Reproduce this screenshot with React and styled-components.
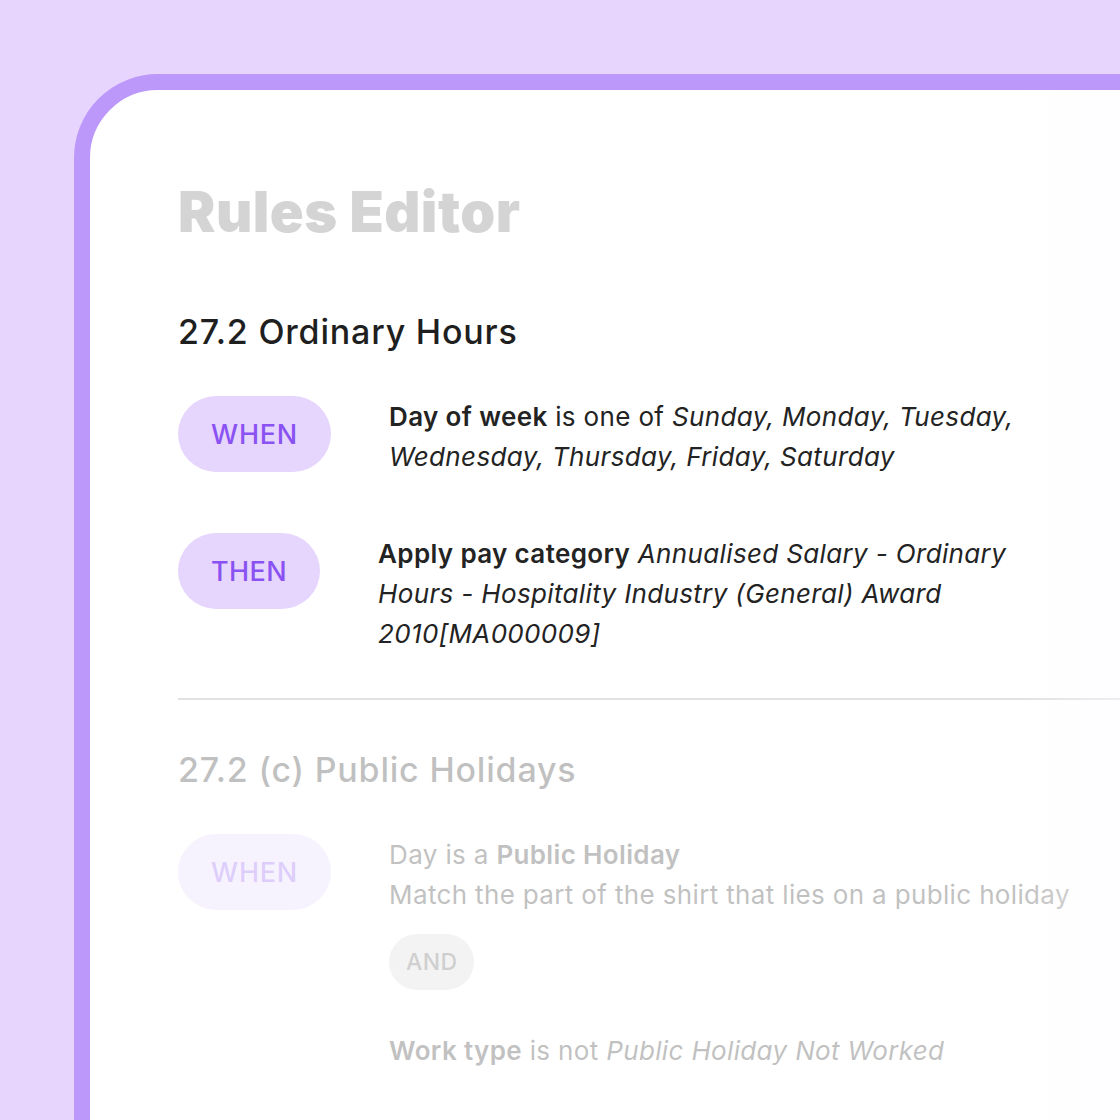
import React from "react";
import styled, { createGlobalStyle } from "styled-components";

const Global = createGlobalStyle`
  html, body { margin: 0; padding: 0; }
  body {
    width: 1120px; height: 1120px; overflow: hidden;
    background: #e7d5fd;
    font-family: "Inter", "Noto Sans", sans-serif;
  }
`;

const Stage = styled.div`
  width: 1120px;
  height: 1120px;
  overflow: hidden;
  padding: 74px 0 0 74px;
  box-sizing: border-box;
`;

const Card = styled.div`
  position: relative;
  width: 1300px;
  height: 1200px;
  box-sizing: border-box;
  background: #ffffff;
  border: 16px solid #bd98fb;
  border-radius: 84px;
  padding: 90px 0 0 88px;
`;

const Title = styled.h1`
  margin: 0;
  font-size: 56px;
  font-weight: 900;
  letter-spacing: 0.5px;
  color: #d4d4d4;
  line-height: 64px;
`;

const Section = styled.section`
  padding-top: ${(p) => p.$top}px;
  opacity: ${(p) => (p.$faded ? 0.28 : 1)};
`;

const Heading = styled.h2`
  margin: 0 0 44px;
  font-size: 34px;
  font-weight: 500;
  letter-spacing: 0.8px;
  color: #1f1f1f;
  line-height: 40px;
`;

const Row = styled.div`
  display: flex;
  align-items: flex-start;
  gap: 58px;
  margin-bottom: ${(p) => p.$mb}px;
`;

const Pill = styled.div`
  flex: none;
  height: 76px;
  padding: 0 33px;
  border-radius: 38px;
  background: #e6d5fc;
  color: #8a52f2;
  font-size: 27px;
  font-weight: 500;
  display: flex;
  align-items: center;
  justify-content: center;
  letter-spacing: ${(p) => p.$ls || 0.8}px;
`;

const Text = styled.div`
  font-size: 26px;
  line-height: 40px;
  color: #232323;
  letter-spacing: 0.35px;
  padding-top: 1px;
  max-width: ${(p) => p.$w}px;
  b { font-weight: 600; }
  i { font-style: italic; }
`;

const Divider = styled.hr`
  margin: 0;
  border: none;
  border-top: 2px solid #e2e2e2;
`;

const And = styled.div`
  display: inline-flex;
  align-items: center;
  justify-content: center;
  height: 56px;
  padding: 0 17px;
  border-radius: 28px;
  background: #d6d6d6;
  color: #555;
  font-size: 23px;
  font-weight: 500;
  margin: 19px 0 41px;
`;

const Fade = styled.div`
  position: absolute;
  inset: 0;
  pointer-events: none;
  border-radius: 70px;
  background: linear-gradient(90deg, rgba(255,255,255,0) 0px, rgba(255,255,255,0) 930px, rgba(252,250,255,0.5) 1040px);
`;

export default function App() {
  return (
    <>
      <Global />
      <Stage>
        <Card>
          <Title>Rules Editor</Title>
          <Section $top={68}>
            <Heading>27.2 Ordinary Hours</Heading>
            <Row $mb={56}>
              <Pill>WHEN</Pill>
              <Text $w={650}>
                <b>Day of week</b> is one of <i>Sunday, Monday, Tuesday, Wednesday, Thursday, Friday, Saturday</i>
              </Text>
            </Row>
            <Row $mb={44}>
              <Pill $ls={0.4}>THEN</Pill>
              <Text $w={670}>
                <b>Apply pay category</b> <i>Annualised Salary - Ordinary Hours - Hospitality Industry (General) Award 2010[MA000009]</i>
              </Text>
            </Row>
            <Divider />
          </Section>
          <Section $top={50} $faded>
            <Heading>27.2 (c) Public Holidays</Heading>
            <Row $mb={0}>
              <Pill>WHEN</Pill>
              <Text $w={800}>
                <div>Day is a <b>Public Holiday</b></div>
                <div>Match the part of the shirt that lies on a public holiday</div>
                <And>AND</And>
                <div><b>Work type</b> is not <i>Public Holiday Not Worked</i></div>
              </Text>
            </Row>
          </Section>
          <Fade />
        </Card>
      </Stage>
    </>
  );
}
